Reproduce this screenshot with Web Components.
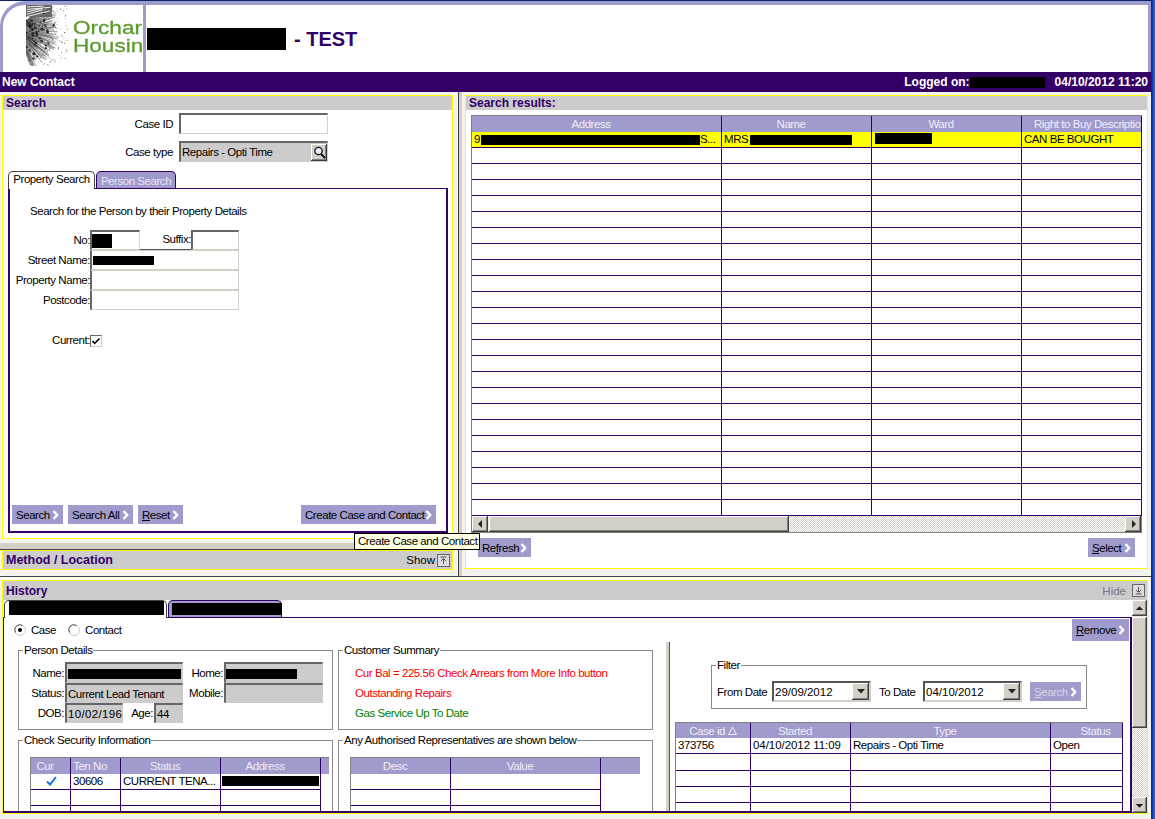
<!DOCTYPE html>
<html>
<head>
<meta charset="utf-8">
<title>New Contact</title>
<style>
  html, body { margin: 0; padding: 0; height: 100%; overflow: hidden; background: #fff; }
  body { font: 11.5px/14px "Liberation Sans", Arial, sans-serif; letter-spacing: -0.45px; color: #000; }
</style>
</head>
<body>
<app-shell>
  <app-header></app-header>
  <app-bar></app-bar>
  <main-split></main-split>
</app-shell>
<script>
// Base class: builds the shadow root once the element is in the page
class Ui extends HTMLElement {
  static css = '';
  markup() { return '<slot></slot>'; }
  connectedCallback() {
    if (this.shadowRoot) return;
    const root = this.attachShadow({ mode: 'open' });
    root.innerHTML = `<style>${this.constructor.css}</style>${this.markup()}`;
  }
}

const LAV = '#9f9bcc';
const PURPLE = '#330066';
const FACE = '#d4d0c8';
const BOLD = `font-family: "Liberation Sans", Arial, sans-serif; font-weight: bold; font-size: 12px; letter-spacing: 0;`;
const RAISED = 'box-shadow: inset -1px -1px #404040, inset 1px 1px #fff, inset -2px -2px #808080;';
const DITHER = 'background: repeating-conic-gradient(#d4d0c8 0 25%, #fff 0 50%) 0 0 / 2px 2px;';

// Black box over a blanked out value
class UiRedact extends Ui {
  static css = `:host { display: block; background: #000; flex: none; }`;
  markup() { return ''; }
}
customElements.define('ui-redact', UiRedact);

// Lavender action button with a white chevron
class UiBtn extends Ui {
  static css = `
    :host { display: flex; box-sizing: border-box; height: 19px; background: ${LAV}; align-items: center;
      justify-content: space-between; padding: 0 4px 0 4px; flex: none; white-space: nowrap; }
    :host([disabled]) { color: #d8d6ea; }
    svg { flex: none; }
  `;
  markup() {
    return `<span><slot></slot></span><svg width="7" height="10" viewBox="0 0 7 10"><path d="M1.5 1 5.2 5 1.5 9" fill="none" stroke="#fff" stroke-width="2.4"/></svg>`;
  }
}
customElements.define('ui-btn', UiBtn);

// Sunken text box
class UiField extends Ui {
  static css = `
    :host { display: flex; box-sizing: border-box; align-items: center; border-style: solid; border-width: 2px 1px 1px 2px; border-color: #666 ${FACE} ${FACE} #666;
      background: #fff; overflow: hidden; white-space: nowrap; padding-left: 1px; flex: none; }
    :host([shaded]) { background: #ccc; border-color: #666 #ccc #ccc #666; }
    :host([flat]) { border-top: 1px solid ${FACE}; }
  `;
}
customElements.define('ui-field', UiField);

// Dropdown box with date text
class UiCombo extends Ui {
  static css = `
    :host { display: flex; box-sizing: border-box; height: 21px; width: 99px; border: 2px solid; border-color: #555 ${FACE} ${FACE} #555;
      align-items: stretch; flex: none; background: #fff; letter-spacing: 0; }
    span { flex: 1; padding-left: 1px; display: flex; align-items: center; }
    b { width: 17px; background: ${FACE}; ${RAISED} display: flex; align-items: center; justify-content: center; }
  `;
  markup() {
    return `<span><slot></slot></span><b><svg width="8" height="5"><path d="M0 0h8L4 4.5z" fill="#222"/></svg></b>`;
  }
}
customElements.define('ui-combo', UiCombo);

// Panel with the yellow outline and grey caption
class UiPanel extends Ui {
  static css = `
    :host { display: block; box-sizing: border-box; border: 1px solid #ffff00; background: #fff; overflow: hidden; }
    .bar { display: flex; align-items: center; justify-content: space-between; height: var(--bar, 14px); background: #ccc;
      color: ${PURPLE}; padding: 0 2px 0 3px; flex: none; }
    .bar b { ${BOLD} font-size: var(--head-size, 12px); }
  `;
  markup() {
    return `<div class="bar"><b>${this.getAttribute('heading')}</b><slot name="tools"></slot></div><slot></slot>`;
  }
}
customElements.define('ui-panel', UiPanel);

// Show / Hide caption control
class UiToggle extends Ui {
  static css = `
    :host { display: flex; align-items: center; gap: 2px; color: #000; letter-spacing: 0; }
    :host([mode=hide]) { color: #777; gap: 6px; }
  `;
  markup() {
    const up = this.getAttribute('mode') !== 'hide';
    const d = up ? 'M3.5 3h6M6.5 10V4.5M4 7l2.5-2.5L9 7' : 'M3.5 10h6M6.5 3v5.5M4 6l2.5 2.5L9 6';
    return `<span>${up ? 'Show' : 'Hide'}</span><svg width="13" height="13"><rect x=".5" y=".5" width="12" height="12" fill="#ddd" stroke="#666"/><path d="${d}" fill="none" stroke="#555"/></svg>`;
  }
}
customElements.define('ui-toggle', UiToggle);

// Grid with a lavender heading, purple row lines and a slotted first row
class UiGrid extends Ui {
  static css = `
    :host { display: block; box-sizing: border-box; border-top: 1px solid #808080; border-left: 1px solid #808080; background: #fff; overflow: hidden; }
    .head { display: flex; height: var(--head, 16px); background: ${LAV}; color: #eeeef8; }
    .head > span { box-sizing: border-box; flex: none; border-right: 1px solid ${PURPLE}; padding-right: 11px; text-align: center; white-space: nowrap; overflow: hidden; line-height: 17px; }
    .row { display: flex; box-sizing: border-box; height: var(--row, 16px); border-bottom: 1px solid ${PURPLE}; width: max-content; }
    .row:first-of-type { height: var(--first, var(--row, 16px)); }
    .row span { box-sizing: border-box; flex: none; border-right: 1px solid ${PURPLE}; padding-left: 2px; white-space: nowrap; overflow: hidden; line-height: 15px; }
    :host([hl]) .row.one { background: #ffff00; }
    .tail { height: 100px; display: flex; }
    .tail i { box-sizing: border-box; flex: none; border-right: 1px solid ${PURPLE}; }
  `;
  markup() {
    const cols = this.getAttribute('cols').split(',').map(Number);
    const head = this.getAttribute('head').split('|');
    const n = +this.getAttribute('rows');
    const cells = (i) => cols.map((w, c) => `<span style="width:${w}px">${i === 0 ? `<slot name="c${c}"></slot>` : ''}</span>`).join('');
    let rows = '';
    for (let i = 0; i < n; i++) rows += `<div class="row ${i === 0 ? 'one' : ''}">${cells(i)}</div>`;
    const tail = this.hasAttribute('tail') ? `<div class="tail">${cols.map(w => `<i style="width:${w}px"></i>`).join('')}</div>` : '';
    const headCells = cols.map((w, c) => `<span style="width:${w}px">${head[c]}</span>`).join('');
    return `<div class="head">${headCells}</div>${rows}${tail}`;
  }
}
customElements.define('ui-grid', UiGrid);

// Scroll bar button with a small triangle
class UiSbtn extends Ui {
  static css = `
    :host { display: flex; flex: none; width: 16px; height: 16px; background: ${FACE}; ${RAISED} align-items: center; justify-content: center; }
  `;
  markup() {
    const d = { left: 'M6 4v8L2 8z', right: 'M3 4v8l4-4z', up: 'M4 6h8L8 2z', down: 'M4 3h8L8 7z' }[this.getAttribute('dir')];
    const vertical = 'updown'.includes(this.getAttribute('dir'));
    return `<svg width="${vertical ? 16 : 9}" height="${vertical ? 9 : 16}" viewBox="0 0 ${vertical ? 16 : 9} ${vertical ? 9 : 16}"><path d="${d}" fill="#222"/></svg>`;
  }
}
customElements.define('ui-sbtn', UiSbtn);

class UiHscroll extends Ui {
  static css = `
    :host { display: flex; box-sizing: border-box; height: 17px; border: 1px solid #808080; border-width: 0 1px 1px 1px; ${DITHER} }
    .thumb { width: 300px; margin-left: 1px; background: ${FACE}; ${RAISED} }
    .track { flex: 1; }
  `;
  markup() { return `<ui-sbtn dir="left"></ui-sbtn><div class="thumb"></div><div class="track"></div><ui-sbtn dir="right"></ui-sbtn>`; }
}
customElements.define('ui-hscroll', UiHscroll);

class UiVscroll extends Ui {
  static css = `
    :host { display: flex; flex-direction: column; flex: none; width: 15px; ${DITHER} }
    ui-sbtn { width: 15px; }
    .thumb { height: 111px; margin-top: 1px; background: ${FACE}; ${RAISED} }
    .track { flex: 1; }
  `;
  markup() { return `<ui-sbtn dir="up"></ui-sbtn><div class="thumb"></div><div class="track"></div><ui-sbtn dir="down"></ui-sbtn>`; }
}
customElements.define('ui-vscroll', UiVscroll);

// Tab header
class UiTab extends Ui {
  static css = `
    :host { display: flex; box-sizing: border-box; height: 17px; flex: none; background: ${LAV}; color: #e6e6f4; border: 1px solid ${PURPLE};
      border-bottom: 0; border-radius: 5px 5px 0 0; align-items: center; justify-content: center; padding-top: 1px; }
    :host([active]) { background: #fff; color: #000; border-color: #444; position: relative; z-index: 1; height: 18px; margin-bottom: -1px; padding-top: 0; padding-bottom: 4px; }
    :host([blank]) { padding: 0; align-items: flex-start; }
  `;
}
customElements.define('ui-tab', UiTab);

// Tab strip with the purple box below it
class UiTabbox extends Ui {
  static css = `
    :host { display: block; box-sizing: border-box; }
    .tabs { display: flex; align-items: flex-end; gap: 1px; height: 17px; padding-left: var(--tab-left, 0); }
    .body { box-sizing: border-box; height: var(--body-h, 100px); border: 2px solid ${PURPLE}; border-top-width: 1px; border-left-width: var(--body-left, 2px); overflow: hidden; }
  `;
  markup() { return `<div class="tabs"><slot name="tabs"></slot></div><div class="body"><slot></slot></div>`; }
}
customElements.define('ui-tabbox', UiTabbox);

// Etched group box
class UiGroup extends Ui {
  static css = `
    :host { display: block; box-sizing: border-box; }
    fieldset { box-sizing: border-box; margin: 0; height: 100%; min-width: 0; border: 1px solid #888; padding: var(--group-pad, 0); }
    legend { margin-left: 4px; padding: 0 1px; line-height: 14px; }
  `;
  markup() { return `<fieldset><legend>${this.getAttribute('heading')}</legend><slot></slot></fieldset>`; }
}
customElements.define('ui-group', UiGroup);

// Round option button
class UiRadio extends Ui {
  static css = `:host { display: flex; align-items: center; gap: 5px; }`;
  markup() {
    const dot = this.hasAttribute('checked') ? '<circle cx="6" cy="6" r="2" fill="#000"/>' : '';
    return `<svg width="12" height="12"><circle cx="6" cy="6" r="5.5" fill="#fff" stroke="#ccc"/><path d="M1.6 8.5A5 5 0 0 1 8.5 1.6" fill="none" stroke="#555"/>${dot}</svg><span><slot></slot></span>`;
  }
}
customElements.define('ui-radio', UiRadio);

// Hover hint that lies over the panels
class UiTooltip extends Ui {
  static css = `
    :host { position: absolute; box-sizing: border-box; border: 1px solid #000; background: #ffffe1; padding: 0 3px; width: 126px; height: 17px; line-height: 15px; white-space: nowrap; z-index: 5; }
  `;
}
customElements.define('ui-tooltip', UiTooltip);

// Blue window edge on the right of the whole page
class AppShell extends Ui {
  static css = `
    :host { display: flex; position: relative; width: 1155px; height: 819px; overflow: hidden; background: #f3f2ee; }
    .page { width: 1151px; flex: none; display: flex; flex-direction: column; }
    .edge { flex: 1; background: linear-gradient(90deg, #0a246a, #0a50d8 60%, #1c6cf0); }
  `;
  markup() { return `<div class="page"><slot></slot></div><div class="edge"></div>`; }
}
customElements.define('app-shell', AppShell);

// Seed head picture of the logo, drawn stroke by stroke
function seedHead() {
  let s = 11;
  const r = () => (s = (s * 16807) % 2147483647) / 2147483647;
  const cx = -10, cy = 24;
  const at = (a, len) => [cx + Math.cos(a) * len, cy + Math.sin(a) * len];
  let out = '';
  // fine grey spokes
  for (let i = 0; i < 300; i++) {
    const a = -0.7 + r() * 1.9;
    const [x, y] = at(a, 14 + r() * 30);
    const g = Math.floor(50 + r() * 110);
    out += `<line x1="${cx}" y1="${cy}" x2="${x.toFixed(1)}" y2="${y.toFixed(1)}" stroke="rgb(${g},${g},${g})" stroke-width="0.5"/>`;
  }
  // dark seeds close to the middle
  for (let i = 0; i < 70; i++) {
    const a = -0.65 + r() * 1.85;
    const [x, y] = at(a, 10 + r() * 28);
    const g = Math.floor(20 + r() * 50);
    out += `<circle cx="${x.toFixed(1)}" cy="${y.toFixed(1)}" r="${(0.6 + r() * 0.9).toFixed(1)}" fill="rgb(${g},${g},${g})"/>`;
  }
  // speckle fading out to the right and bottom
  for (let i = 0; i < 190; i++) {
    const a = -0.7 + r() * 1.95;
    const [x, y] = at(a, 34 + r() * 24);
    const g = Math.floor(90 + r() * 140);
    out += `<rect x="${x.toFixed(1)}" y="${y.toFixed(1)}" width="1" height="1" fill="rgb(${g},${g},${g})"/>`;
  }
  // pale streaks in the top left
  for (let i = 0; i < 5; i++) {
    out += `<line x1="1" y1="${2 + i * 2.4}" x2="${15 + r() * 12}" y2="${1 + i * 1.2}" stroke="#fff" stroke-width="0.9"/>`;
  }
  return `<svg width="42" height="61" viewBox="0 0 42 61" style="filter:blur(.4px)"><rect width="26" height="12" fill="#666"/>${out}</svg>`;
}

class AppHeader extends Ui {
  static css = `
    :host { display: block; flex: none; border-top: 1px solid #0a246a; background: #fff; letter-spacing: 0; }
    .frame { box-sizing: border-box; height: 71px; display: flex; border: 3px solid ${LAV}; border-width: 4px 3px 0 3px; border-top-left-radius: 25px; background: #fff; }
    .logo { box-sizing: border-box; width: 143px; flex: none; display: flex; border-right: 3px solid ${LAV}; overflow: hidden; padding-left: 23px; }
    .logo svg { flex: none; }
    .words { margin: 14px 0 0 5px; color: #5c9a2e; font: 18.5px/18px "Liberation Sans", sans-serif; -webkit-text-stroke: 0.3px #5c9a2e; white-space: nowrap; transform: scaleX(1.22); transform-origin: left top; }
    .title { display: flex; align-items: center; padding-top: 1px; color: ${PURPLE}; font: bold 20px "Liberation Sans", sans-serif; }
    .title span { margin-left: 8px; }
    ui-redact { width: 139px; height: 22px; margin-left: 1px; }
  `;
  markup() {
    return `<div class="frame"><div class="logo">${seedHead()}<div class="words">Orchard<br>Housing</div></div>
      <div class="title"><ui-redact></ui-redact><span>- TEST</span></div></div>`;
  }
}
customElements.define('app-header', AppHeader);

class AppBar extends Ui {
  static css = `
    :host { display: flex; flex: none; height: 20px; background: ${PURPLE}; color: #fff; align-items: center; justify-content: space-between;
      padding: 0 3px 0 2px; ${BOLD} }
    .right { display: flex; align-items: center; }
    ui-redact { width: 75px; height: 11px; margin: 0 10px 0 0; }
  `;
  markup() {
    return `<span>New Contact</span><div class="right"><span>Logged on:</span><ui-redact></ui-redact><span>04/10/2012 11:20</span></div>`;
  }
}
customElements.define('app-bar', AppBar);

// Everything under the purple bar
class MainSplit extends Ui {
  static css = `
    :host { display: grid; grid-template-columns: 458px 7px 686px; grid-template-rows: 484px 4px 1fr; flex: 1; min-height: 0; }
    .left { padding: 3px 0 0 2px; display: flex; flex-direction: column; box-sizing: border-box; }
    .left search-form { width: 451px; height: 444px; }
    .left ui-panel { width: 451px; height: 20px; --bar: 18px; --head-size: 12.5px; }
    .seam { height: 11px; flex: none; margin-left: -2px; box-sizing: border-box; border-bottom: 1px solid #444; background: linear-gradient(#f3f2ee 4px, ${FACE} 4px); }
    .vsep { box-sizing: border-box; border-left: 1px solid #444; background: linear-gradient(90deg, ${FACE} 3px, #f3f2ee 3px); }
    .right { padding-top: 3px; box-sizing: border-box; }
    .right results-pane { width: 683px; height: 474px; }
    .hsep { grid-column: 1 / 4; box-sizing: border-box; border-top: 1px solid #444; background: #fff; }
    history-pane { grid-column: 1 / 4; margin-left: 2px; width: 1146px; height: 234px; }
  `;
  markup() {
    return `
      <div class="left">
        <search-form></search-form>
        <div class="seam"></div>
        <ui-panel heading="Method / Location"><ui-toggle slot="tools"></ui-toggle></ui-panel>
      </div>
      <div class="vsep"></div>
      <div class="right"><results-pane></results-pane></div>
      <div class="hsep"></div>
      <history-pane></history-pane>
      <ui-tooltip style="left:354px;top:533px">Create Case and Contact</ui-tooltip>`;
  }
}
customElements.define('main-split', MainSplit);

class SearchForm extends Ui {
  static css = `
    :host { display: block; }
    ui-panel { height: 100%; }
    .row { display: flex; align-items: center; }
    .case { margin-top: 3px; height: 21px; }
    .case + .case { margin-top: 7px; }
    .case label { width: 170px; text-align: right; margin-right: 6px; }
    .case ui-field { width: 149px; height: 21px; }
    .type { justify-content: space-between; padding-right: 0; }
    .mag { width: 16px; height: 17px; background: ${FACE}; ${RAISED} display: flex; align-items: center; justify-content: center; flex: none; }
    ui-tabbox { margin: 9px 0 0 5px; width: 440px; --body-h: 345px; }
    .tab1 { width: 87px; }
    .tab2 { width: 80px; }
    .inner { box-sizing: border-box; height: 100%; display: flex; flex-direction: column; }
    .intro { margin: 15px 0 12px 20px; }
    .pf { display: flex; height: 20px; }
    .pf:first-of-type { height: 21px; }
    .pf label { width: 80px; text-align: right; align-self: center; flex: none; }
    .wide { width: 149px; }
    .no { width: 50px; }
    .mid { box-sizing: border-box; width: 51px; flex: none; border-bottom: 2px solid #555; text-align: right; height: 21px; line-height: 19px; }
    .suf { width: 48px; }
    .current { display: flex; margin-top: 25px; height: 12px; align-items: center; }
    .current label { width: 80px; text-align: right; flex: none; margin-top: -3px; }
    .check { width: 12px; height: 12px; flex: none; box-sizing: border-box; border: 1px solid; border-color: #666 #ccc #ccc #666; display: block; }
    .btns { margin-top: auto; display: flex; gap: 5px; padding: 0 10px 7px 2px; }
    .btns .create { margin-left: auto; width: 135px; }
  `;
  markup() {
    return `
    <ui-panel heading="Search">
      <div class="row case"><label>Case ID</label><ui-field></ui-field></div>
      <div class="row case"><label>Case type</label>
        <ui-field shaded class="type">Repairs - Opti Time<span class="mag"><svg width="13" height="13"><circle cx="5.5" cy="5" r="3.7" fill="#eef" stroke="#111" stroke-width="1.3"/><path d="M8 8l4 4" stroke="#111" stroke-width="2"/></svg></span></ui-field>
      </div>
      <ui-tabbox>
        <ui-tab slot="tabs" active class="tab1">Property Search</ui-tab>
        <ui-tab slot="tabs" class="tab2">Person Search</ui-tab>
        <div class="inner">
          <div class="intro">Search for the Person by their Property Details</div>
          <div class="pf"><label>No:</label><ui-field class="no"><ui-redact style="width:20px;height:14px;margin-left:-1px"></ui-redact></ui-field><div class="mid">Suffix:</div><ui-field class="suf"></ui-field></div>
          <div class="pf"><label>Street Name:</label><ui-field flat class="wide"><ui-redact style="width:61px;height:9px"></ui-redact></ui-field></div>
          <div class="pf"><label>Property Name:</label><ui-field flat class="wide"></ui-field></div>
          <div class="pf"><label>Postcode:</label><ui-field flat class="wide"></ui-field></div>
          <div class="current"><label>Current:</label><svg class="check" viewBox="0 0 10 10"><path d="M1.5 5l2.2 2.4L8.5 2.5" fill="none" stroke="#000" stroke-width="1.6"/></svg></div>
          <div class="btns">
            <ui-btn style="width:51px">Search</ui-btn>
            <ui-btn style="width:65px">Search All</ui-btn>
            <ui-btn style="width:45px"><u>R</u>eset</ui-btn>
            <ui-btn class="create">Create Case and Contact</ui-btn>
          </div>
        </div>
      </ui-tabbox>
    </ui-panel>`;
  }
}
customElements.define('search-form', SearchForm);

class ResultsPane extends Ui {
  static css = `
    :host { display: block; }
    ui-panel { height: 100%; }
    .wrap { margin: 5px 0 0 5px; width: 671px; }
    ui-grid { --first: 17px; }
    .cell { display: flex; align-items: center; height: 15px; }
    .mrs { width: 26px; flex: none; }
    .btns { display: flex; justify-content: space-between; padding: 5px 12px 0; }
  `;
  markup() {
    return `
    <ui-panel heading="Search results:">
      <div class="wrap">
        <ui-grid hl cols="250,150,150,120" rows="24" head="Address|Name|Ward|<span style='margin-left:12px'>Right to Buy Description</span>">
          <div slot="c0" class="cell">9<ui-redact style="width:219px;height:10px;margin-left:1px"></ui-redact>S...</div>
          <div slot="c1" class="cell"><span class="mrs">MRS</span><ui-redact style="width:102px;height:10px"></ui-redact></div>
          <div slot="c2" class="cell"><ui-redact style="width:57px;height:11px;margin:-3px 0 0 1px"></ui-redact></div>
          <div slot="c3" class="cell">CAN BE BOUGHT</div>
        </ui-grid>
        <ui-hscroll></ui-hscroll>
      </div>
      <div class="btns">
        <ui-btn style="width:53px">Re<u>f</u>resh</ui-btn>
        <ui-btn style="width:47px"><u>S</u>elect</ui-btn>
      </div>
    </ui-panel>`;
  }
}
customElements.define('results-pane', ResultsPane);

class HistoryPane extends Ui {
  static css = `
    :host { display: block; }
    ui-panel { height: 100%; --bar: 19px; }
    .body { display: flex; }
    ui-tabbox { width: 1129px; flex: none; --tab-left: 1px; --body-h: 196px; --body-left: 1px; }
    ui-vscroll { height: 213px; margin-top: 0; }
    .t1 { width: 163px; }
    .t2 { width: 114px; border-width: 1px 1px 0; background: ${LAV}; padding: 2px 0 0 3px; justify-content: flex-start; align-items: flex-start; }
    .top { display: flex; justify-content: space-between; height: 24px; padding-right: 1px; }
    .radios { display: flex; gap: 12px; padding: 5px 0 0 10px; height: 14px; }
    .top ui-btn { height: 22px; width: 57px; margin-top: 1px; }
    .cols { display: flex; }
    .lcol { width: 662px; flex: none; padding-left: 14px; box-sizing: border-box; display: grid; grid-template-columns: 315px 315px; column-gap: 5px; row-gap: 3px; grid-template-rows: 87px 90px; margin-top: 1px; height: 178px; align-content: start; }
    .split { width: 4px; flex: none; box-sizing: border-box; background: ${FACE}; border-right: 1px solid #555; height: 180px; }
    .rcol { flex: 1; }
    .pr { display: flex; height: 20px; }
    .pr:first-child { height: 21px; margin-top: 5px; }
    .pr label { flex: none; text-align: right; align-self: center; padding-right: 1px; box-sizing: border-box; }
    .dob { letter-spacing: 0.35px; }
    .sum { padding: 6px 0 0 16px; }
    .sum div { height: 20px; line-height: 20px; color: #f00; }
    .sum div.ok { color: #008000; }
    .sec { margin: 10px 0 0 11px; width: 299px; --head: 16px; }
    .rep { margin: 10px 0 0 11px; width: 290px; --head: 16px; }
    .filter { margin: 16px 0 0 41px; width: 376px; height: 51px; }
    .fr { display: flex; align-items: center; padding: 9px 0 0 5px; height: 21px; }
    .fr .lbl { flex: none; }
    .fr .to { margin-left: 8px; width: 44px; }
    .fr ui-btn { margin-left: 8px; width: 51px; }
    .cases { margin: 13px 0 0 5px; width: 448px; --head: 15px; --row: 16.33px; }
    .date { letter-spacing: -0.05px; }
    .tick { display: flex; justify-content: center; padding-top: 2px; }
  `;
  markup() {
    return `
    <ui-panel heading="History">
      <ui-toggle slot="tools" mode="hide"></ui-toggle>
      <div class="body">
        <ui-tabbox>
          <ui-tab slot="tabs" active class="t1" blank><ui-redact style="width:155px;height:14px;margin-left:1px"></ui-redact></ui-tab>
          <ui-tab slot="tabs" class="t2"><ui-redact style="width:110px;height:12px"></ui-redact></ui-tab>
          <div class="top">
            <div class="radios"><ui-radio checked>Case</ui-radio><ui-radio>Contact</ui-radio></div>
            <ui-btn><u>R</u>emove</ui-btn>
          </div>
          <div class="cols">
            <div class="lcol">
              <ui-group heading="Person Details">
                <div class="pr"><label style="width:46px">Name:</label><ui-field shaded style="width:118px"><ui-redact style="width:113px;height:10px;margin-top:2px"></ui-redact></ui-field><label style="width:41px">Home:</label><ui-field shaded style="width:99px"><ui-redact style="width:73px;height:10px;margin:2px 0 0 -3px"></ui-redact></ui-field></div>
                <div class="pr"><label style="width:46px">Status:</label><ui-field shaded style="width:118px">Current Lead Tenant</ui-field><label style="width:41px">Mobile:</label><ui-field shaded style="width:99px"></ui-field></div>
                <div class="pr"><label style="width:46px">DOB:</label><ui-field shaded class="dob" style="width:58px">10/02/1968</ui-field><label style="width:31px">Age:</label><ui-field shaded style="width:29px">44</ui-field></div>
              </ui-group>
              <ui-group heading="Customer Summary">
                <div class="sum"><div>Cur Bal = 225.56 Check Arrears from More Info button</div><div>Outstanding Repairs</div><div class="ok">Gas Service Up To Date</div></div>
              </ui-group>
              <ui-group heading="Check Security Information">
                <ui-grid class="sec" tail cols="40,50,100,100" rows="2" head="Cur|Ten No|Status|Address">
                  <div slot="c0" class="tick"><svg width="11" height="10"><path d="M1 5.5l3 3L10 1" fill="none" stroke="#1a6fe0" stroke-width="2"/></svg></div>
                  <span slot="c1">30606</span>
                  <span slot="c2">CURRENT TENA...</span>
                  <ui-redact slot="c3" style="width:97px;height:10px;margin:2px 0 0 -1px"></ui-redact>
                </ui-grid>
              </ui-group>
              <ui-group heading="Any Authorised Representatives are shown below">
                <ui-grid class="rep" tail cols="100,150" rows="2" head="Desc|Value"></ui-grid>
              </ui-group>
            </div>
            <div class="split"></div>
            <div class="rcol">
              <ui-group heading="Filter" class="filter">
                <div class="fr">
                  <span class="lbl" style="width:55px">From Date</span><ui-combo>29/09/2012</ui-combo>
                  <span class="lbl to">To Date</span><ui-combo>04/10/2012</ui-combo>
                  <ui-btn disabled><u>S</u>earch</ui-btn>
                </div>
              </ui-group>
              <ui-grid class="cases" tail cols="75,100,200,72" rows="5" head="<span style='margin-right:-11px'>Case id <svg width='9' height='9' viewBox='0 0 9 9'><path d='M4.5 1 8.5 8.5H.5z' fill='none' stroke='#eeeef8'/></svg></span>|Started|Type|<span style='margin-left:29px'>Status</span>">
                <span slot="c0">373756</span>
                <span slot="c1" class="date">04/10/2012 11:09</span>
                <span slot="c2">Repairs - Opti Time</span>
                <span slot="c3">Open</span>
              </ui-grid>
            </div>
          </div>
        </ui-tabbox>
        <ui-vscroll></ui-vscroll>
      </div>
    </ui-panel>`;
  }
}
customElements.define('history-pane', HistoryPane);
</script>
</body>
</html>
